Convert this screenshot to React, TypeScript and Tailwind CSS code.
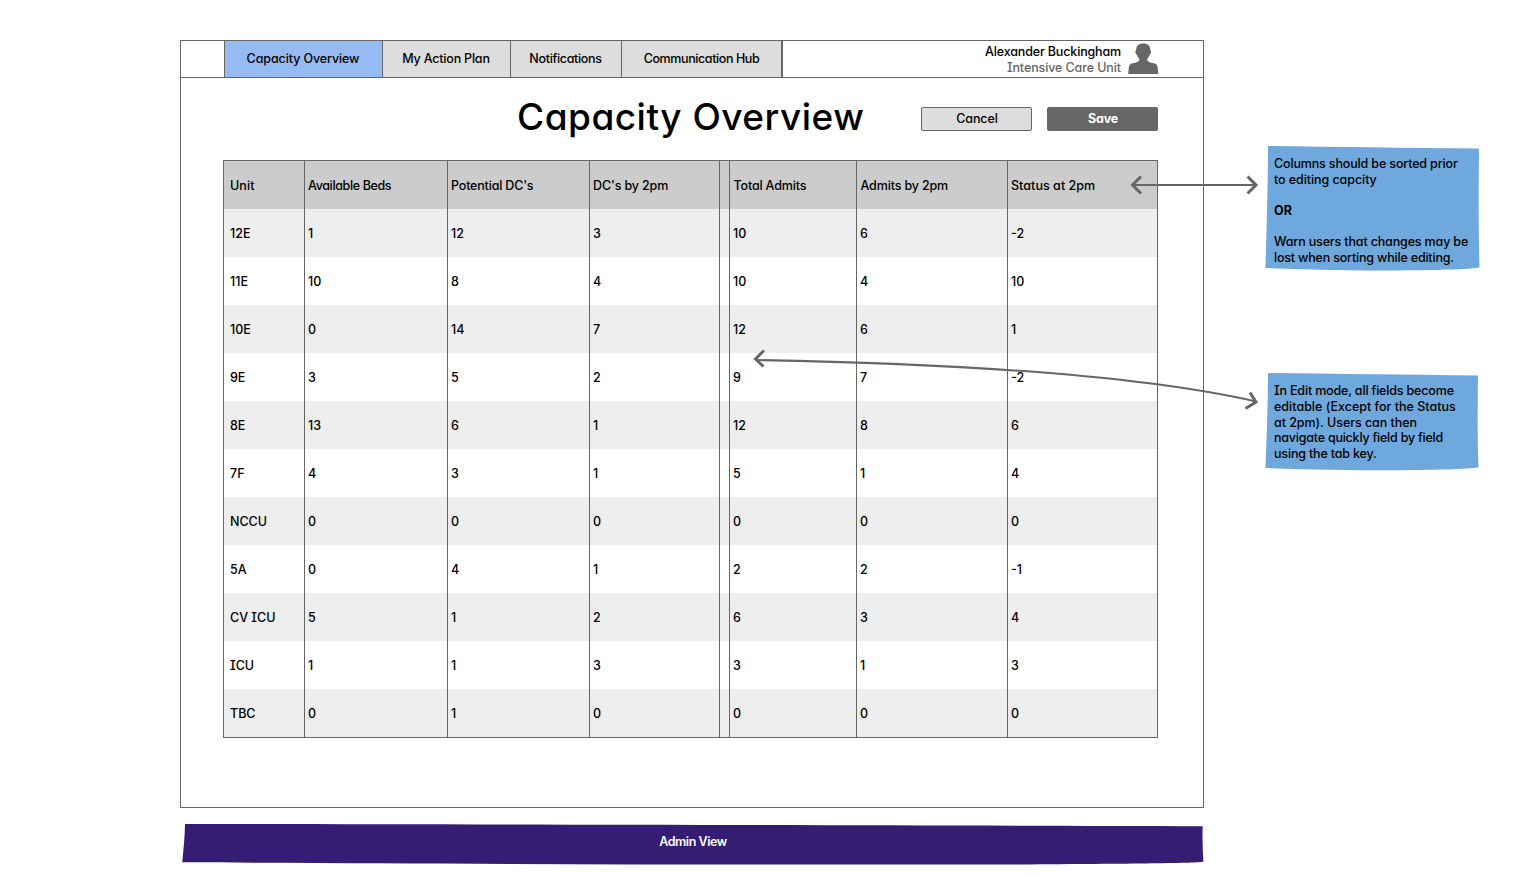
import type { ReactNode } from "react";

const tabs: { label: string; box: string; text: string }[] = [
  { label: "Capacity Overview", box: "w-[158px] bg-[#95bbf2]", text: "tracking-[-0.1px] pr-px" },
  { label: "My Action Plan", box: "w-[128px] bg-[#dddddd]", text: "tracking-[-0.2px] pr-px" },
  { label: "Notifications", box: "w-[111px] bg-[#dddddd]", text: "tracking-[-0.32px] pr-px" },
  { label: "Communication Hub", box: "w-[160px] bg-[#dddddd]", text: "tracking-[-0.4px]" },
];

const columns: { label: string; text: string }[] = [
  { label: "Unit", text: "pl-1.5 tracking-[0.1px]" },
  { label: "Available Beds", text: "pl-[3px] tracking-[-0.36px]" },
  { label: "Potential DC's", text: "pl-[3px] tracking-[-0.18px]" },
  { label: "DC's by 2pm", text: "pl-[3px] tracking-[-0.14px]" },
  { label: "", text: "" },
  { label: "Total Admits", text: "pl-[3.5px] tracking-[-0.16px]" },
  { label: "Admits by 2pm", text: "pl-[3.5px] tracking-[-0.15px]" },
  { label: "Status at 2pm", text: "pl-[3px] tracking-[0.05px]" },
];

const rows: string[][] = [
  ["12E", "1", "12", "3", "", "10", "6", "-2"],
  ["11E", "10", "8", "4", "", "10", "4", "10"],
  ["10E", "0", "14", "7", "", "12", "6", "1"],
  ["9E", "3", "5", "2", "", "9", "7", "-2"],
  ["8E", "13", "6", "1", "", "12", "8", "6"],
  ["7F", "4", "3", "1", "", "5", "1", "4"],
  ["NCCU", "0", "0", "0", "", "0", "0", "0"],
  ["5A", "0", "4", "1", "", "2", "2", "-1"],
  ["CV ICU", "5", "1", "2", "", "6", "3", "4"],
  ["ICU", "1", "1", "3", "", "3", "1", "3"],
  ["TBC", "0", "1", "0", "", "0", "0", "0"],
];

const rowGrid = "grid h-12 grid-cols-[81px_143px_142px_130px_10px_127px_151px_149px]";
const cell = "flex items-center whitespace-nowrap pt-[2px]";

function UserIcon() {
  return (
    <svg className="h-[31px] w-[31px]" viewBox="0 0 31 31" fill="#666666">
      <path d="M15.2 .4C10.6 .4 8 3 8.200 7.200C7.300 7.400 7.300 8.400 7.600 9.800C7.900 11.200 8.400 11.800 9.100 11.900C9.500 13.500 10.200 14.800 11.200 15.700V17.400C10.500 18.600 8.500 19.400 5.600 20.100C2.500 20.800 1.400 21.700 .9 24.100L.2 31H30.300L29.600 24.100C29.100 21.700 28 20.800 24.900 20.100C22 19.400 20 18.600 19.300 17.400V15.700C20.300 14.800 21 13.500 21.400 11.900C22.100 11.800 22.600 11.200 22.900 9.800C23.200 8.400 23.200 7.400 22.300 7.200C22.500 3 19.900 .4 15.200 .4Z" />
    </svg>
  );
}

function Table() {
  return (
    <div className="w-[935px] border border-[#666666]">
      <div className={`${rowGrid} bg-[#cccccc]`}>
        {columns.map((c, i) => (
          <div key={i} className={`${cell} ${c.text} ${i < 7 ? "border-r border-[#666666]" : ""}`}>
            {c.label}
          </div>
        ))}
      </div>
      {rows.map((r, n) => (
        <div key={r[0]} className={`${rowGrid} ${n % 2 === 0 ? "bg-[#eeeeee]" : "bg-white"}`}>
          {r.map((v, i) => (
            <div
              key={i}
              className={`${cell} ${i === 0 ? "pl-1.5" : "pl-[3px]"} ${i < 7 ? "border-r border-[#666666]" : ""}`}
            >
              {v}
            </div>
          ))}
        </div>
      ))}
    </div>
  );
}

function Line({ short, className, children }: { short?: boolean; className?: string; children?: ReactNode }) {
  return (
    <p className={`whitespace-nowrap leading-4 ${short ? "h-[15px]" : "h-4"} ${className ?? ""}`}>{children}</p>
  );
}

export default function App() {
  return (
    <div className="relative h-[875px] w-[1514px] overflow-hidden bg-white pt-10 pl-[180px] font-['Inter',sans-serif] text-[12.5px] font-medium text-black [font-feature-settings:'cv11','cv08']">
      <main className="h-[768px] w-[1024px] border border-[#666666]">
        <header className="flex h-[37px] border-b border-[#666666] pl-[43px]">
          <nav className="flex border-r border-l border-[#666666]">
            {tabs.map((t) => (
              <div key={t.label} className={`flex items-center justify-center border-r border-[#666666] whitespace-nowrap ${t.box}`}>
                <span className={t.text}>{t.label}</span>
              </div>
            ))}
          </nav>
          <div className="ml-auto flex pr-[44px]">
            <div className="pt-[2.5px] text-right leading-4 whitespace-nowrap">
              <div className="tracking-[-0.15px]">Alexander Buckingham</div>
              <div className="tracking-[-0.1px] text-[#666666]">Intensive Care Unit</div>
            </div>
            <div className="ml-[7px] pt-0.5">
              <UserIcon />
            </div>
          </div>
        </header>

        <div className="flex h-[82px] items-start pl-[335px]">
          <h1 className="mt-[19px] w-[370px] pl-px text-[37px] leading-[40px] tracking-[0.5px] whitespace-nowrap">Capacity Overview</h1>
          <button className="mt-[29px] ml-[35px] flex h-6 w-[111px] items-center justify-center rounded-[2px] border border-[#666666] bg-[#dddddd] pl-px tracking-[-0.1px]">
            Cancel
          </button>
          <button className="mt-[29px] ml-[15px] flex h-6 w-[111px] items-center justify-center rounded-[2px] bg-[#666666] pl-px font-bold tracking-[-0.2px] text-white">
            Save
          </button>
        </div>

        <div className="pl-[42px]">
          <Table />
        </div>
      </main>

      <footer className="relative mt-4 h-[41px] w-[1024px]">
        <svg className="absolute inset-0 h-full w-full" viewBox="0 0 1024 41" fill="#351c75">
          <path d="M5 0C260 .2 700 1.4 1022.7 2.2C1022.3 14 1022.6 26 1023.4 37.6C1022 39.2 960 39.8 850 40.4C600 41 260 40 2.3 38.2C3.4 26 4.8 14 5 0Z" />
        </svg>
        <div className="relative pt-[10px] pl-0.5 text-center leading-4 font-semibold tracking-[-0.45px] text-white">Admin View</div>
      </footer>

      <aside className="absolute top-[146px] left-[1265px] h-[125px] w-[215px]">
        <svg className="absolute inset-0 h-full w-full" viewBox="0 0 215 125" fill="#6fa8dc">
          <path d="M3 0C70 .8 140 2 214 2.6C213.6 40 213.3 82 214.5 121.5C195 124.5 110 126 .5 122C1.5 82 3 40 3 0Z" />
        </svg>
        <div className="relative pt-[9.6px] pl-[9px]">
          <Line className="tracking-[-0.15px]">Columns should be sorted prior</Line>
          <Line className="tracking-[-0.07px]">to editing capcity</Line>
          <Line short />
          <Line className="font-bold">OR</Line>
          <Line short />
          <Line className="tracking-[-0.15px]">Warn users that changes may be</Line>
          <Line className="tracking-[-0.19px]">lost when sorting while editing.</Line>
        </div>
      </aside>

      <aside className="absolute top-[373px] left-[1265px] h-[98px] w-[214px]">
        <svg className="absolute inset-0 h-full w-full" viewBox="0 0 214 98" fill="#6fa8dc">
          <path d="M3 0C70 .8 140 1.8 213 2.4C212.6 32 212.3 64 213.5 94.5C195 97 110 98.8 .5 95C1.5 64 3 32 3 0Z" />
        </svg>
        <div className="relative pt-[9.6px] pl-[9px]">
          <Line className="tracking-[-0.17px]">In Edit mode, all fields become</Line>
          <Line className="tracking-[0.01px]">editable (Except for the Status</Line>
          <Line short className="tracking-[-0.05px]">at 2pm). Users can then</Line>
          <Line className="tracking-[-0.22px]">navigate quickly field by field</Line>
          <Line className="tracking-[-0.17px]">using the tab key.</Line>
        </div>
      </aside>

      <svg className="absolute top-[170px] left-[1125px] h-[30px] w-[140px]" viewBox="1125 170 140 30" fill="none" stroke="#666666">
        <path strokeWidth="2" d="M1133 185H1256" />
        <path strokeWidth="3" d="M1141 176.500L1132.500 185L1141 193.500M1247.500 176.500L1256 185L1247.500 193.500" />
      </svg>
      <svg className="absolute top-[340px] left-[745px] h-[75px] w-[520px]" viewBox="745 340 520 75" fill="none" stroke="#666666">
        <path strokeWidth="2" d="M755 360Q1100 366 1256 401.500" />
        <path strokeWidth="3" d="M764 350.500L755.500 359L763.500 366.500M1250 392.500L1256 402L1245.500 408.500" />
      </svg>
    </div>
  );
}
